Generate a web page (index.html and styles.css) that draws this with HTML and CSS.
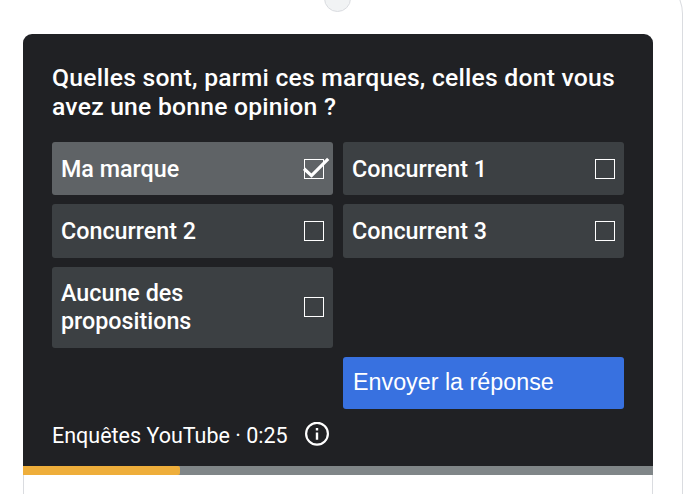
FILE: index.html
```html
<!DOCTYPE html>
<html lang="fr">
<head>
  <meta charset="UTF-8">
  <title>Enquête YouTube</title>
  <link rel="stylesheet" href="styles.css">
</head>
<body>

  <div class="phone">
    <span class="camera"></span>

    <div class="screen">
      <form class="survey">
        <h1>Quelles sont, parmi ces marques, celles dont vous<br>avez une bonne opinion ?</h1>

        <div class="options">
          <label class="option selected">
            <span class="name">Ma marque</span>
            <span class="box">
              <svg class="check" width="30" height="26" viewBox="0 0 30 26">
                <path d="M4 13.8 L11.5 20.6 L28.2 3.8" fill="none" stroke="#fff" stroke-width="3.2"/>
              </svg>
            </span>
          </label>
          <label class="option">
            <span class="name">Concurrent 1</span>
            <span class="box"></span>
          </label>
          <label class="option">
            <span class="name">Concurrent 2</span>
            <span class="box"></span>
          </label>
          <label class="option">
            <span class="name">Concurrent 3</span>
            <span class="box"></span>
          </label>
          <label class="option tall">
            <span class="name">Aucune des<br>propositions</span>
            <span class="box"></span>
          </label>
          <button type="button" class="send">Envoyer la réponse</button>
        </div>

        <div class="info">
          <span class="timer">Enquêtes YouTube · 0:25</span>
          <svg width="24" height="24" viewBox="0 0 24 24">
            <circle cx="12" cy="11.7" r="10.9" fill="none" stroke="#fff" stroke-width="2.2"/>
            <path d="M10.8 6h2.4v2.4h-2.4zM10.8 10.4h2.4v7.4h-2.4z" fill="#fff"/>
          </svg>
        </div>
      </form>

      <div class="progress">
        <div class="progress-value"></div>
      </div>
    </div>
  </div>

</body>
</html>
```

FILE: styles.css
```css
* {
  box-sizing: border-box;
}
body {
  margin: 0;
  background-color: #fff;
  font-family: Roboto, Arial, sans-serif;
  color: #fff;
}
.phone {
  width: 690px;
  height: 520px;
  margin: -26px 0 0 -7px;
  padding: 59px 29px 0;
  border: 1px solid #dadce0;
  border-bottom: none;
  border-radius: 40px 40px 0 0;
  position: relative;
}
.camera {
  position: absolute;
  top: 10px;
  left: 330px;
  width: 27px;
  height: 27px;
  border: 1px solid #dadce0;
  border-radius: 50%;
  background-color: #f1f3f4;
}
.screen {
  height: 460px;
  border: 1px solid #dadce0;
  border-top: none;
  border-bottom: none;
  border-radius: 9px 9px 0 0;
}
.survey {
  height: 432px;
  margin: 0 -1px;
  padding: 29px 29px 0;
  border-radius: 9px 9px 0 0;
  background-color: #202124;
}
h1 {
  margin: 0 0 21px;
  font-size: 24.7px;
  font-weight: 500;
  letter-spacing: 0.23px;
  line-height: 29px;
  white-space: nowrap;
}
.options {
  display: grid;
  grid-template-columns: 281px 281px;
  grid-template-rows: 53px 54px 81px 52px;
  gap: 9px 10px;
}
.option {
  display: flex;
  align-items: center;
  justify-content: space-between;
  padding: 0 9px;
  border-radius: 3px;
  background-color: #3c4043;
  font-size: 23.3px;
  font-weight: 500;
  line-height: 28px;
}
.selected {
  background-color: #5f6366;
}
.tall {
  padding-bottom: 2px;
}
.box {
  width: 20px;
  height: 20px;
  border: 1px solid #fff;
  position: relative;
}
.check {
  position: absolute;
  top: -5px;
  left: -5px;
}
.send {
  grid-column: 2;
  grid-row: 4;
  padding: 0 10px 2px;
  border: none;
  border-radius: 3px;
  background-color: #3871e0;
  color: #fff;
  font-family: "Liberation Sans", Arial, sans-serif;
  font-size: 23.3px;
  text-align: left;
}
.info {
  display: flex;
  align-items: flex-start;
  gap: 17px;
  margin-top: 13px;
}
.timer {
  font-size: 21.5px;
  line-height: 28px;
}
.progress {
  height: 9px;
  margin: 0 -1px;
  background-color: #808688;
}
.progress-value {
  width: 157px;
  height: 9px;
  border-radius: 0 2px 2px 0;
  background-color: #eeae3b;
}
```
